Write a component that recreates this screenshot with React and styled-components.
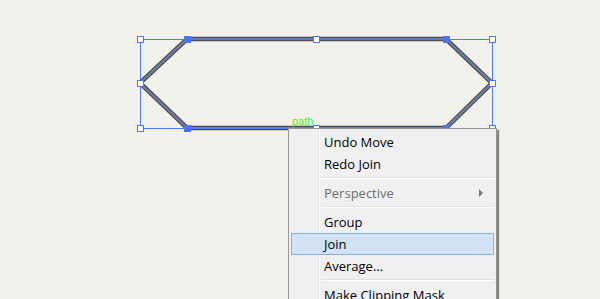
import React from "react";
import styled, { createGlobalStyle } from "styled-components";

const GlobalStyle = createGlobalStyle`
  html, body {
    margin: 0;
    padding: 0;
    background: #f2f1ec;
    overflow: hidden;
  }
`;

const Stage = styled.div`
  position: relative;
  width: 600px;
  height: 299px;
  overflow: hidden;
  background: #f2f1ec;
  font-family: "Open Sans", "Liberation Sans", sans-serif;
`;

const Artboard = styled.svg`
  display: block;
  width: 600px;
  height: 299px;
`;

const PathLabel = styled.text`
  font-family: "Liberation Sans", Arial, sans-serif;
  font-size: 11px;
  fill: #33f533;
`;

const Menu = styled.div`
  position: absolute;
  left: 288px;
  top: 128px;
  width: 207px;
  padding: 2px 0 3px;
  background: #f0f0f0;
  border: 1px solid #979797;
  box-shadow: 2px 2px 1px rgba(0, 0, 0, 0.45);
  display: flex;
  flex-direction: column;
`;

const Gutter = styled.div`
  position: absolute;
  left: 29px;
  top: 0;
  bottom: 0;
  width: 1px;
  background: #e2e3e3;
  border-right: 1px solid #fff;
`;

const Item = styled.div`
  position: relative;
  height: 22px;
  margin: 0 2px;
  padding-left: 32px;
  display: flex;
  align-items: center;
  justify-content: space-between;
  font-size: 13px;
  color: ${(p) => (p.$disabled ? "#6d6d6d" : "#000")};
  border: 1px solid ${(p) => (p.$active ? "#7eb4ea" : "transparent")};
  background: ${(p) => (p.$active ? "#d1e3f4" : "transparent")};
  box-sizing: border-box;
`;

const Label = styled.span`
  line-height: 20px;
`;

const Arrow = styled.span`
  width: 0;
  height: 0;
  margin-right: 10px;
  border-top: 4px solid transparent;
  border-bottom: 4px solid transparent;
  border-left: 4px solid #7a7a7a;
`;

const Separator = styled.div`
  position: relative;
  margin: 2px 2px 3px 32px;
  height: 1px;
  background: #e0e0e0;
  border-bottom: 1px solid #fff;
`;

const handles = [
  [140, 39], [316, 39], [492, 39],
  [140, 83], [492, 83],
  [140, 128], [316, 128], [492, 128],
];

const anchors = [
  [187, 39], [446, 39], [187, 128], [446, 128],
];

const shape = "140,83 187,39 446,39 492,83 446,128 187,128";

function Canvas() {
  return (
    <Artboard viewBox="0 0 600 299">
      <polygon points={shape} fill="none" stroke="#4d4d4d" strokeWidth="4.5" strokeLinejoin="miter" />
      <polygon points={shape} fill="none" stroke="#8a8a8a" strokeWidth="2" />
      <polygon points={shape} fill="none" stroke="#4a6ff0" strokeWidth="1" />
      <rect x="140.5" y="39.5" width="352" height="89" fill="none" stroke="#4a7cf2" strokeWidth="1" />
      {handles.map(([x, y]) => (
        <rect key={`h${x}-${y}`} x={x - 2.5} y={y - 2.5} width="6" height="6" fill="#fff" stroke="#4a7cf2" strokeWidth="1" />
      ))}
      {anchors.map(([x, y]) => (
        <rect key={`a${x}-${y}`} x={x - 3} y={y - 3} width="7" height="7" fill="#4a74f4" />
      ))}
      <PathLabel x="292" y="125">path</PathLabel>
    </Artboard>
  );
}

const App = () => {
  return (
    <Stage>
      <GlobalStyle />
      <Canvas />
      <Menu>
        <Gutter />
        <Item><Label>Undo Move</Label></Item>
        <Item><Label>Redo Join</Label></Item>
        <Separator />
        <Item $disabled>
          <Label>Perspective</Label>
          <Arrow />
        </Item>
        <Separator />
        <Item><Label>Group</Label></Item>
        <Item $active><Label>Join</Label></Item>
        <Item><Label>Average...</Label></Item>
        <Separator />
        <Item><Label>Make Clipping Mask</Label></Item>
      </Menu>
    </Stage>
  );
};

export default App;
